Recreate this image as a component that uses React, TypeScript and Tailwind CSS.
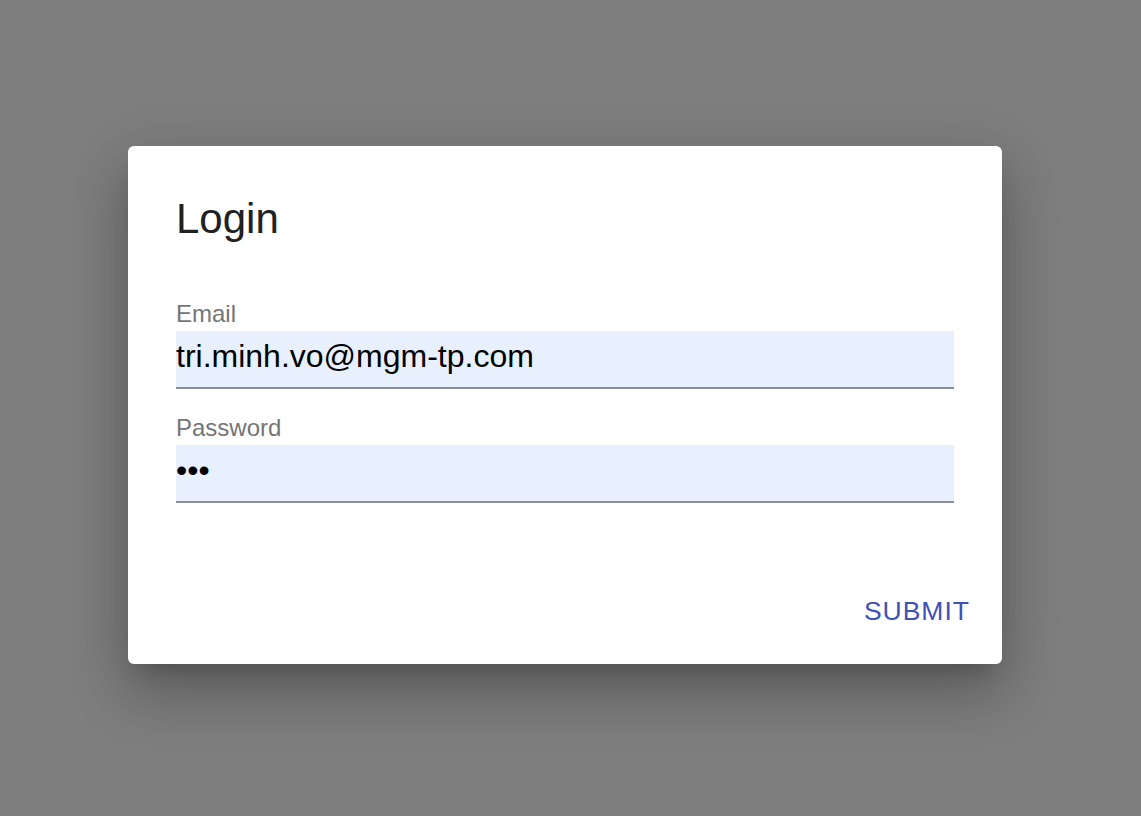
export default function App() {
  return (
    <div
      className="flex h-[816px] w-full items-center justify-center bg-[#7f7f7f] pr-[11px] pb-[6px]"
      style={{ fontFamily: '"Liberation Sans", Arial, sans-serif' }}
    >
      <div className="flex w-[874px] flex-col rounded-[6px] bg-white shadow-[0_16px_22px_-10px_rgba(0,0,0,0.2),0_36px_57px_4px_rgba(0,0,0,0.14),0_13px_69px_12px_rgba(0,0,0,0.12)]">
        <div className="px-12 pt-[49px]">
          <h2 className="text-[42px] leading-[48px] text-[#212121]">Login</h2>

          <div className="mt-[57px]">
            <label className="block text-[24px] leading-[28px] text-[#757575]">
              Email
            </label>
            <div className="mt-[3px] h-[58px] border-b-2 border-[#8a8f9a] bg-[#e8f0fe] pt-[7px] text-[32px] leading-[36px] text-black">
              tri.minh.vo@mgm-tp.com
            </div>
          </div>

          <div className="mt-[25px]">
            <label className="block text-[24px] leading-[28px] text-[#757575]">
              Password
            </label>
            <div className="mt-[3px] h-[58px] border-b-2 border-[#8a8f9a] bg-[#e8f0fe] pt-[7px] text-[32px] leading-[36px] text-black">
              •••
            </div>
          </div>
        </div>

        <div className="mt-[90px] flex justify-end pr-[32px] pb-[35px]">
          <button className="text-[26.5px] leading-[36px] tracking-[1px] text-[#3f51b5] uppercase">
            Submit
          </button>
        </div>
      </div>
    </div>
  )
}
